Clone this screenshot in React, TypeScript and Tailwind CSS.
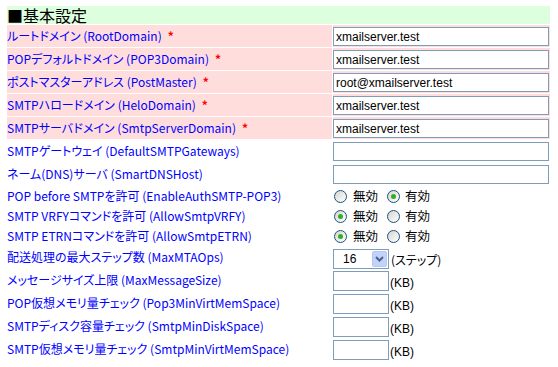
import React from "react";

type Row = {
  label: string;
  key: string;
  required?: boolean;
  kind: "text" | "radio" | "select" | "kb";
  value?: string;
  on?: boolean;
};

const rows: Row[] = [
  { label: "ルートドメイン", key: "RootDomain", required: true, kind: "text", value: "xmailserver.test" },
  { label: "POPデフォルトドメイン", key: "POP3Domain", required: true, kind: "text", value: "xmailserver.test" },
  { label: "ポストマスターアドレス", key: "PostMaster", required: true, kind: "text", value: "root@xmailserver.test" },
  { label: "SMTPハロードメイン", key: "HeloDomain", required: true, kind: "text", value: "xmailserver.test" },
  { label: "SMTPサーバドメイン", key: "SmtpServerDomain", required: true, kind: "text", value: "xmailserver.test" },
  { label: "SMTPゲートウェイ", key: "DefaultSMTPGateways", kind: "text", value: "" },
  { label: "ネーム(DNS)サーバ", key: "SmartDNSHost", kind: "text", value: "" },
  { label: "POP before SMTPを許可", key: "EnableAuthSMTP-POP3", kind: "radio", on: true },
  { label: "SMTP VRFYコマンドを許可", key: "AllowSmtpVRFY", kind: "radio", on: false },
  { label: "SMTP ETRNコマンドを許可", key: "AllowSmtpETRN", kind: "radio", on: false },
  { label: "配送処理の最大ステップ数", key: "MaxMTAOps", kind: "select", value: "16" },
  { label: "メッセージサイズ上限", key: "MaxMessageSize", kind: "kb" },
  { label: "POP仮想メモリ量チェック", key: "Pop3MinVirtMemSpace", kind: "kb" },
  { label: "SMTPディスク容量チェック", key: "SmtpMinDiskSpace", kind: "kb" },
  { label: "SMTP仮想メモリ量チェック", key: "SmtpMinVirtMemSpace", kind: "kb" },
];

const Radio = ({ checked }: { checked: boolean }) => (
  <span className="inline-flex items-center justify-center w-[13px] h-[13px] rounded-full border border-[#1c5180] bg-gradient-to-br from-[#d6d6ce] to-white">
    {checked && <span className="w-[5px] h-[5px] rounded-full bg-[#2fae2b]" />}
  </span>
);

const Field = ({ row }: { row: Row }) => {
  if (row.kind === "text") {
    return (
      <div className="pt-[2px]">
        <input
          readOnly
          value={row.value}
          className="block w-[216px] h-[19px] border border-[#7f9db9] bg-white px-[2px] text-[12px] text-black outline-none font-[Liberation_Sans,sans-serif]"
        />
      </div>
    );
  }
  if (row.kind === "radio") {
    return (
      <div className="flex items-center h-full pl-px pt-[2px] text-[12.5px] text-black">
        <Radio checked={!row.on} />
        <span className="ml-[6px]">無効</span>
        <span className="ml-[9px] flex">
          <Radio checked={!!row.on} />
        </span>
        <span className="ml-[5px]">有効</span>
      </div>
    );
  }
  if (row.kind === "select") {
    return (
      <div className="flex items-start pt-[3px]">
        <div className="flex items-center w-[56px] h-[20px] border border-[#7f9db9] bg-white">
          <span className="flex-1 pl-[9px] text-[12px] text-black font-[Liberation_Sans,sans-serif]">16</span>
          <span className="flex items-center justify-center w-[15px] h-[16px] mr-px rounded-[2px] bg-[#c1d3fb] border border-[#b4c8f6]">
            <svg width="9" height="6" viewBox="0 0 9 6">
              <path d="M1 1 L4.5 4.5 L8 1" fill="none" stroke="#4d6185" strokeWidth="2" />
            </svg>
          </span>
        </div>
        <span className="ml-[2px] mt-[2px] text-[12px] text-black">(ステップ)</span>
      </div>
    );
  }
  return (
    <div className="flex items-start pt-[2px]">
      <input
        readOnly
        value=""
        className="block w-[56px] h-[20px] border border-[#7f9db9] bg-white outline-none"
      />
      <span className="ml-px mt-[3px] text-[12px] text-black font-[Liberation_Sans,sans-serif]">(KB)</span>
    </div>
  );
};

const heightFor = (kind: Row["kind"]) => {
  if (kind === "radio") return "h-[19px]";
  return "h-[22px]";
};

export default function App() {
  return (
    <div className="w-[558px] h-[367px] bg-white overflow-hidden pt-[6px] pl-[7px] font-[Noto_Sans_CJK_JP,sans-serif] [font-feature-settings:'palt']">
      <div className="grid grid-cols-[325px_217px] gap-px">
        <div className="col-span-2 h-[18px] bg-[#ddffdd] text-[16px] leading-[18px] text-black">
          ■基本設定
        </div>
        {rows.map((row) => (
          <React.Fragment key={row.key}>
            <div
              className={`${heightFor(row.kind)} flex items-center text-[12px] text-[#0000ff] whitespace-nowrap ${
                row.required ? "bg-[#ffdddd]" : ""
              }`}
            >
              <span>
                {row.label} ({row.key})
              </span>
              {row.required && <span className="ml-[6px] text-[#ff0000] font-bold">*</span>}
            </div>
            <div className={`${heightFor(row.kind)} ${row.required ? "bg-[#ffdddd]" : ""}`}>
              <Field row={row} />
            </div>
          </React.Fragment>
        ))}
      </div>
    </div>
  );
}
